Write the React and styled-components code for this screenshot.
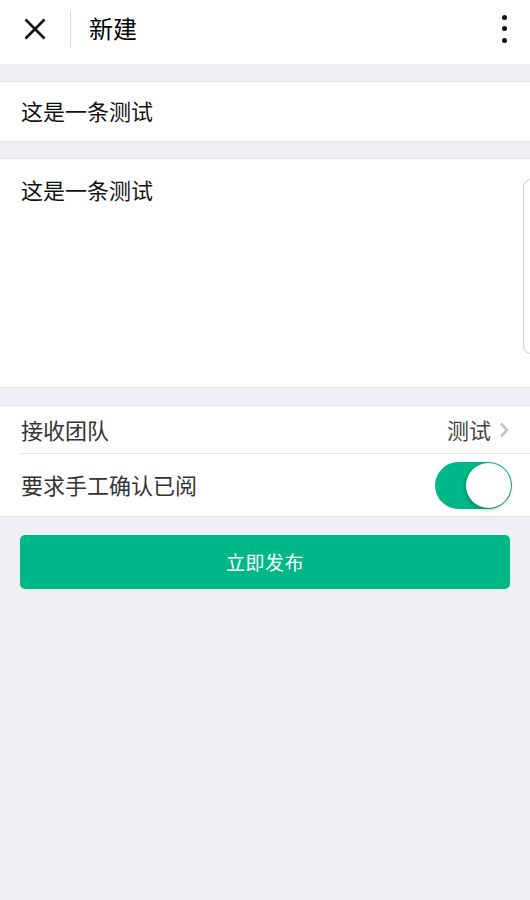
import React from "react";
import styled, { createGlobalStyle } from "styled-components";

const Global = createGlobalStyle`
  html, body { margin: 0; padding: 0; background: #efeff4; }
  body { font-family: "Noto Sans CJK SC", "Noto Sans", sans-serif; }
  * { box-sizing: border-box; }
`;

const Page = styled.div`
  width: 530px;
  min-height: 900px;
  background: #efeff4;
  display: flex;
  flex-direction: column;
  overflow: hidden;
`;

const Header = styled.header`
  height: 64px;
  background: #fff;
  display: flex;
  align-items: center;
  padding: 0 22px 7px 24px;
`;

const IconButton = styled.div`
  width: 22px;
  height: 22px;
  display: flex;
  align-items: center;
  justify-content: center;
`;

const Divider = styled.div`
  width: 1px;
  height: 36px;
  background: #d8d8d8;
  margin: 0 18px 0 24px;
`;

const Title = styled.h1`
  margin: 0 0 2px;
  flex: 1;
  font-size: 24px;
  font-weight: 400;
  color: #000;
  line-height: 30px;
`;

const MoreButton = styled.div`
  display: flex;
  flex-direction: column;
  align-items: center;
  gap: 6.5px;
  width: 8px;
`;

const Dot = styled.span`
  width: 5px;
  height: 5px;
  border-radius: 50%;
  background: #111;
`;

const Card = styled.section`
  background: #fff;
  border-top: 1px solid #e3e3e6;
  border-bottom: 1px solid #e3e3e6;
  margin-top: ${(p) => p.$gap}px;
`;

const InputRow = styled.div`
  height: 59px;
  display: flex;
  align-items: center;
  padding: 0 21px 3px;
  font-size: 22px;
  color: #111;
`;

const AreaRow = styled.div`
  height: 228px;
  display: flex;
  align-items: flex-start;
  padding-left: 21px;
`;

const AreaText = styled.div`
  flex: 1;
  font-size: 22px;
  line-height: 30px;
  padding-top: 15px;
  color: #111;
`;

const ResizeEdge = styled.div`
  width: 16px;
  height: 175px;
  margin-top: 20px;
  margin-right: -9px;
  border: 1px solid #cfcfd2;
  border-radius: 8px;
`;

const ListRow = styled.div`
  height: ${(p) => p.$h}px;
  display: flex;
  align-items: center;
  padding: 0 ${(p) => p.$pr}px 0 21px;
  position: relative;
  ${(p) =>
    p.$sep &&
    `&::after {
      content: "";
      position: absolute;
      left: 20px;
      right: 0;
      bottom: 0;
      height: 1px;
      background: #e3e3e6;
    }`}
`;

const Label = styled.span`
  flex: 1;
  font-size: 22px;
  color: #333;
  margin-bottom: 3px;
`;

const Value = styled.span`
  font-size: 22px;
  color: #444;
  margin-right: 8px;
  margin-bottom: 3px;
`;

const Switch = styled.div`
  width: 77px;
  height: 47px;
  border-radius: 24px;
  background: #00b887;
  display: flex;
  justify-content: flex-end;
  align-items: center;
  padding: 1px;
`;

const Knob = styled.div`
  width: 45px;
  height: 45px;
  border-radius: 50%;
  background: #fff;
  box-shadow: -1px 2px 4px rgba(0, 0, 0, 0.25);
`;

const Button = styled.button`
  margin: 18px 20px 0 20px;
  height: 54px;
  border: none;
  border-radius: 5px;
  background: #00b887;
  color: #fff;
  font-family: inherit;
  font-size: 19px;
  letter-spacing: 0.5px;
  padding-bottom: 2px;
`;

export default function App() {
  return (
    <Page>
      <Global />
      <Header>
        <IconButton>
          <svg width="22" height="22" viewBox="0 0 22 22">
            <path d="M1.5 1.5 L20.5 20.5 M20.5 1.5 L1.5 20.5" stroke="#111" strokeWidth="2.6" strokeLinecap="butt" />
          </svg>
        </IconButton>
        <Divider />
        <Title>新建</Title>
        <MoreButton>
          <Dot />
          <Dot />
          <Dot />
        </MoreButton>
      </Header>

      <Card $gap={17}>
        <InputRow>这是一条测试</InputRow>
      </Card>

      <Card $gap={16}>
        <AreaRow>
          <AreaText>这是一条测试</AreaText>
          <ResizeEdge />
        </AreaRow>
      </Card>

      <Card $gap={17}>
        <ListRow $h={48} $pr={21} $sep>
          <Label>接收团队</Label>
          <Value>测试</Value>
          <svg width="10" height="16" viewBox="0 0 10 16">
            <path d="M2 1.5 L8 8 L2 14.5" fill="none" stroke="#c4c4c8" strokeWidth="2.6" />
          </svg>
        </ListRow>
        <ListRow $h={62} $pr={18}>
          <Label>要求手工确认已阅</Label>
          <Switch>
            <Knob />
          </Switch>
        </ListRow>
      </Card>

      <Button>立即发布</Button>
    </Page>
  );
}
